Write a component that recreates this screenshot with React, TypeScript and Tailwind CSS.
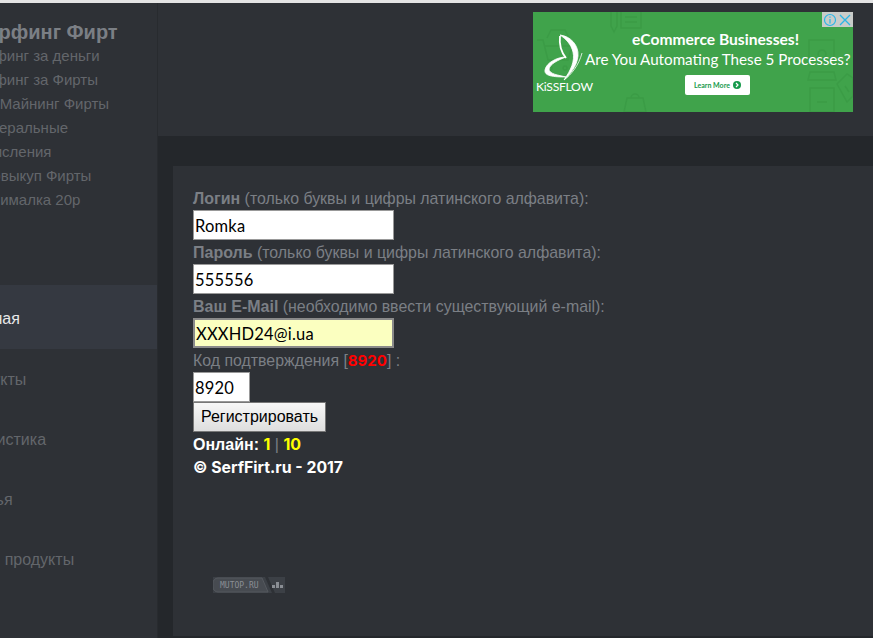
const subLinks = [
  { label: "Серфинг за деньги", offset: "-ml-[33px]" },
  { label: "Серфинг за Фирты", offset: "-ml-[33px]" },
  { label: "АвтоМайнинг Фирты", offset: "-ml-[33px]" },
  { label: "Реферальные", offset: "-ml-[31px]" },
  { label: "Начисления", offset: "-ml-[33px]" },
  { label: "Автовыкуп Фирты", offset: "-ml-[32px]" },
  { label: "Минималка 20р", offset: "-ml-[29px]" },
];

const navLinks = [
  { label: "Продукты", offset: "-ml-[46px]" },
  { label: "Статистика", offset: "-ml-[38px]" },
  { label: "Статья", offset: "-ml-[39px]" },
  { label: "Наши продукты", offset: "-ml-[42px]" },
];

function Label({ strong, hint }: { strong: string; hint: string }) {
  return (
    <div className="h-6 pt-px leading-6">
      <b className="text-[16px] font-bold">{strong}</b> {hint}
    </div>
  );
}

function Field({ value, fill = "bg-white", width = "w-[201px]", border = "border border-[#999999]" }: { value: string; fill?: string; width?: string; border?: string }) {
  return (
    <input
      readOnly
      value={value}
      className={`block h-[30px] ${width} ${fill} ${border} px-px pt-[2px] text-[16.5px] tracking-[0.2px] text-black outline-none font-['Lato','Liberation_Sans',sans-serif]`}
    />
  );
}

function AdIcons() {
  return (
    <svg className="absolute inset-0" width="320" height="100" viewBox="0 0 320 100" fill="none" stroke="#3b9c46" strokeWidth="1.5">
      <path d="M4 28h6l5 20h20l4-14H12M17 54a2 2 0 1 0 .1 0M32 54a2 2 0 1 0 .1 0M14 26l4-8h14l4 8" />
      <path d="M78 0v14l3 6 3-6V0M88 0v16h20V0M92 5h12M92 10h12" />
      <path d="M94 86h16l3 14H91zM98 86a4 4 0 0 1 8 0" />
      <path d="M276 28h25v20h-25zM289 38a4 4 0 1 0 .1 0" />
      <path d="M277 76h24v24h-24zM275 68h28l-2-8h-24zM284 90h10" />
      <path d="M304 72l10-10 6 4v18l-6 6zM312 74l4 6" />
    </svg>
  );
}

function Ad() {
  return (
    <div className="relative h-[100px] w-[320px] overflow-hidden bg-[#40a34b] text-white font-['Lato','Liberation_Sans',sans-serif]">
      <AdIcons />
      {/* butterfly logo */}
      <svg className="absolute left-0 top-[13px]" width="70" height="75" viewBox="0 0 70 75" fill="white" stroke="white" strokeWidth="0.8">
        <path d="M27 10C37 11 46 20 45 31C44 41 37 49 31 55C38 45 42 36 40 27C38 19 33 14 27 10Z" />
        <path d="M33 32C24 32 13 38 12 45C11 51 20 52 33 52C25 50 16 49 16 44C17 39 25 35 33 32Z" />
        <path d="M27 11C26 20 28 27 33 33" fill="none" strokeWidth="1.8" />
        <path d="M31 55C38 50 46 40 49 28" fill="none" strokeWidth="0.8" />
      </svg>
      <div className="absolute left-[3px] top-[68px] text-[12.2px] leading-[14px] tracking-tight">KiSSFLOW</div>
      <div className="absolute left-[99px] top-[18px] whitespace-nowrap text-[15.6px] font-bold leading-[18px]">eCommerce Businesses!</div>
      <div className="absolute left-[52px] top-[37px] whitespace-nowrap text-[15.2px] leading-[20px]">Are You Automating These 5 Processes?</div>
      <div className="absolute left-[152px] top-[63px] flex h-5 w-[65px] items-center justify-center gap-[3px] rounded-[2px] bg-white text-[7px] font-bold text-[#169a4b]">
        Learn More
        <span className="flex h-2 w-2 items-center justify-center rounded-full bg-[#169a4b]">
          <svg width="6" height="6" viewBox="0 0 6 6" fill="none" stroke="white" strokeWidth="1.2">
            <path d="M2 1l2 2-2 2" />
          </svg>
        </span>
      </div>
      <div className="absolute right-0 top-0 flex h-[15px] w-[31px] items-center justify-between bg-[#c9ccc9] px-px">
        <svg width="14" height="14" viewBox="0 0 14 14" fill="none" stroke="#29b6e6" strokeWidth="1.2">
          <circle cx="7" cy="7" r="5.5" />
          <path d="M7 6v4.5M7 3.5v1.2" />
        </svg>
        <svg width="14" height="14" viewBox="0 0 14 14" fill="none" stroke="#29b6e6" strokeWidth="1.3">
          <path d="M2 2l10 10M12 2L2 12" />
        </svg>
      </div>
    </div>
  );
}

function MutopBadge() {
  return (
    <svg width="72" height="16" viewBox="0 0 72 16">
      <rect width="72" height="16" fill="#3c4046" />
      <path d="M5 1h44l6 14H5a5 5 0 0 1-5-5V6a5 5 0 0 1 5-5z" fill="#474b51" stroke="#55595f" />
      <path d="M52 0l7 16h3L55 0z" fill="#2e3136" />
      <text x="7" y="11" fontSize="8" fill="#8a8e94" fontFamily="'DejaVu Sans Mono', monospace">MUTOP.RU</text>
      <path d="M59 8h3v3h-3zM63 5h3v6h-3zM67 8h3v3h-3z" fill="#8a8e94" />
    </svg>
  );
}

export default function App() {
  return (
    <div className="flex h-[638px] w-[873px] flex-col overflow-hidden bg-[#24272b] font-['Liberation_Sans',Arial,sans-serif]">
      <div className="h-[3px] shrink-0 bg-[#e4e4e4]" />
      <div className="flex min-h-0 flex-1">
        <aside className="w-[158px] shrink-0 overflow-hidden border-r border-[#282b2f] bg-[#2e3136] pt-[17px]">
          <div className="-ml-[27px] h-6 whitespace-nowrap text-[20px] font-bold leading-6 text-[#7b7f85]">Серфинг Фирт</div>
          <ul className="text-[15px] leading-6 text-[#63666b]">
            {subLinks.map((link) => (
              <li key={link.label} className={`${link.offset} h-6 whitespace-nowrap`}>{link.label}</li>
            ))}
          </ul>
          <div className="mt-[73px] flex h-16 items-center whitespace-nowrap bg-[#353941] pt-[4px] text-[16px] text-[#e8e8e8]">
            <span className="-ml-[41px]">Главная</span>
          </div>
          <ul className="text-[16px] text-[#63666b]">
            {navLinks.map((link) => (
              <li key={link.label} className={`flex h-[60px] items-center whitespace-nowrap pt-[2px] ${link.offset}`}>{link.label}</li>
            ))}
          </ul>
        </aside>
        <div className="flex min-w-0 flex-1 flex-col">
          <header className="flex h-[133px] shrink-0 justify-end bg-[#2e3136] pr-5 pt-[9px]">
            <Ad />
          </header>
          <main className="min-h-0 flex-1 pl-[15px] pt-[30px] pb-[2px]">
            <div className="h-full bg-[#2e3136] pl-5 pt-5 text-[15.9px] text-[#7b7f85]">
              <Label strong="Логин" hint="(только буквы и цифры латинского алфавита):" />
              <Field value="Romka" />
              <Label strong="Пароль" hint="(только буквы и цифры латинского алфавита):" />
              <Field value="555556" />
              <Label strong="Ваш E-Mail" hint="(необходимо ввести существующий e-mail):" />
              <Field value="XXXHD24@i.ua" fill="bg-[#fbffc0]" border="border-2 border-[#8a8a8a]" />
              <div className="h-6 pt-px leading-6">
                Код подтверждения [<b className="font-['Inter',sans-serif] text-[15px] font-bold text-[#ff0000]">8920</b>] :
              </div>
              <Field value="8920" width="w-[57px]" />
              <button className="block h-[30px] w-[133px] border border-[#777777] bg-gradient-to-b from-[#f7f7f7] to-[#dedede] text-[16px] text-black">Регистрировать</button>
              <div className="h-6 text-[16px] font-bold leading-[24px] text-white">
                Онлайн: <span className="font-['Inter',sans-serif] text-[16px] text-[#ffff00]">1</span> <span className="font-normal text-[#7b7f85]">|</span> <span className="font-['Inter',sans-serif] text-[16px] text-[#ffff00]">10</span>
              </div>
              <div className="h-6 font-['Inter',sans-serif] text-[15.8px] font-bold leading-6 text-white">© SerfFirt.ru - 2017</div>
              <div className="ml-5 mt-[97px]">
                <MutopBadge />
              </div>
            </div>
          </main>
        </div>
      </div>
    </div>
  );
}
